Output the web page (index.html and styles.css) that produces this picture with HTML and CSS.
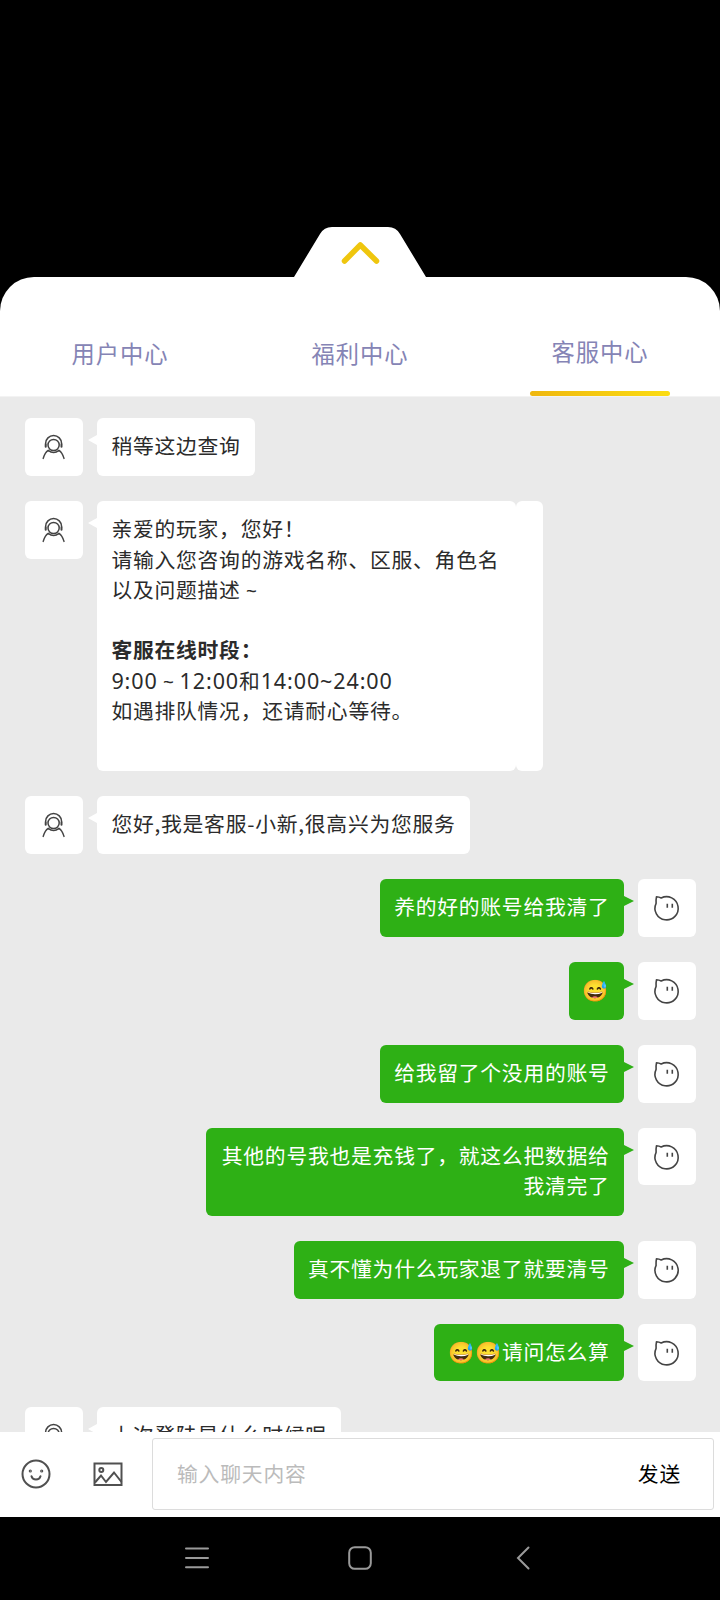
FILE: index.html
```html
<!DOCTYPE html>
<html lang="zh-CN">
<head>
<meta charset="utf-8">
<title>客服中心</title>
<link rel="stylesheet" href="styles.css">
</head>
<body>
<svg class="defs" aria-hidden="true">
  <symbol id="agent" viewBox="0 0 58 58">
    <g fill="none" stroke="#444" stroke-width="1.5" stroke-linecap="round">
      <circle cx="28.6" cy="27" r="5.600"/>
      <path d="M20.600 26v-.5a8 8 0 0 1 16 0v.5M18.200 40.400c1.100-3.700 2.600-6.500 5-8 3.400 2.700 7.400 2.700 10.800 0 2.400 1.500 3.900 4.300 5 8"/>
      <path stroke-width="2" d="M20.700 26.500v2.200M36.500 26.500v2.200"/>
    </g>
  </symbol>
  <symbol id="player" viewBox="0 0 58 58">
    <g fill="none" stroke="#444" stroke-width="1.600" stroke-linecap="round" stroke-linejoin="round">
      <path d="M18.100 24.300Q17.900 20.500 18.500 17.700 21 17.800 23.200 19A11.600 11.600 0 1 1 18.100 24.300"/>
      <path stroke-linecap="butt" d="M29.300 24.800v4M34.300 24.800v4"/>
    </g>
  </symbol>
</svg>
<div class="screen">
  <div class="game">
    <svg class="handle" viewBox="0 0 132 50"><path d="M0 50 26 7Q30 0 38 0h56q8 0 12 7l26 43z" fill="#fff"/><path d="M50.500 34 66.300 18 82.500 34" fill="none" stroke="#efc60e" stroke-width="5.500" stroke-linecap="round" stroke-linejoin="round"/></svg>
  </div>
  <div class="sheet">
    <div class="tabs">
      <div class="tab">用户中心</div>
      <div class="tab">福利中心</div>
      <div class="tab active">客服中心</div>
    </div>
  </div>
  <div class="chat">
    <div class="msg"><div class="avatar"><svg><use href="#agent"/></svg></div><div class="bubble">稍等这边查询</div></div>
    <div class="msg"><div class="avatar"><svg><use href="#agent"/></svg></div><div class="card"><div class="bubble wide">亲爱的玩家，您好！<br>请输入您咨询的游戏名称、区服、角色名<br>以及问题描述<span class="latin tilde"> ~</span><br><br><b>客服在线时段：</b><br><span class="latin">9:00<span class="tilde"> ~ </span>12:00</span>和<span class="latin">14:00~24:00</span><br>如遇排队情况，还请耐心等待。<br><br></div><div class="tail"></div></div></div>
    <div class="msg"><div class="avatar"><svg><use href="#agent"/></svg></div><div class="bubble">您好,我是客服-小新,很高兴为您服务</div></div>
    <div class="msg own"><div class="avatar"><svg><use href="#player"/></svg></div><div class="bubble">养的好的账号给我清了</div></div>
    <div class="msg own"><div class="avatar"><svg><use href="#player"/></svg></div><div class="bubble"><span class="emoji">😅</span></div></div>
    <div class="msg own"><div class="avatar"><svg><use href="#player"/></svg></div><div class="bubble">给我留了个没用的账号</div></div>
    <div class="msg own"><div class="avatar"><svg><use href="#player"/></svg></div><div class="bubble long">其他的号我也是充钱了，就这么把数据给<br>我清完了</div></div>
    <div class="msg own"><div class="avatar"><svg><use href="#player"/></svg></div><div class="bubble">真不懂为什么玩家退了就要清号</div></div>
    <div class="msg own"><div class="avatar"><svg><use href="#player"/></svg></div><div class="bubble"><span class="emoji">😅</span><span class="emoji">😅</span>请问怎么算</div></div>
    <div class="msg"><div class="avatar"><svg><use href="#agent"/></svg></div><div class="bubble">上次登陆是什么时候呢</div></div>
  </div>
  <div class="composer">
    <svg class="tool" viewBox="0 0 30 30" fill="none" stroke="#505050" stroke-width="2" stroke-linecap="round"><circle cx="15" cy="15" r="13.500"/><path d="M10.500 17.300c1.200 4.400 7.800 4.400 9 0"/><circle cx="9.300" cy="12" r=".6"/><circle cx="20.700" cy="12" r=".6"/></svg>
    <svg class="tool" viewBox="0 0 30 30" fill="none" stroke="#505050" stroke-width="2"><rect x="1.500" y="4.500" width="27" height="21.500"/><circle cx="8.300" cy="11" r="2"/><path d="m2 23.500 6-7 5 6.500 8-9.500 7.500 9.500"/></svg>
    <div class="field"><span class="hint">输入聊天内容</span><span class="send">发送</span></div>
  </div>
  <div class="nav">
    <svg viewBox="0 0 26 26"><path d="M2 3.500h22M2 13h22M2 22.300h22"/></svg>
    <svg viewBox="0 0 26 26"><rect x="2.200" y="2.200" width="21.600" height="21.600" rx="5.500"/></svg>
    <svg viewBox="0 0 26 26"><path d="M18.500 2.500 8 13l10.500 10.500"/></svg>
  </div>
</div>
</body>
</html>
```
FILE: styles.css
```css
* { box-sizing: border-box; }
body {
  margin: 0;
  background: #000;
  font-family: "Noto Sans CJK SC", sans-serif;
}
.defs { display: none; }
.screen {
  display: flex;
  flex-direction: column;
  width: 720px;
  height: 1600px;
  overflow: hidden;
}
.game {
  display: flex;
  flex: none;
  height: 277px;
  justify-content: center;
  align-items: flex-end;
}
.handle { display: block; width: 132px; height: 50px; }
.sheet {
  flex: none;
  height: 120px;
  padding-top: 34px;
  background: #fff;
  border-radius: 34px 34px 0 0;
  border-bottom: 1px solid #f3f3f3;
}
.tabs { display: grid; grid-template-columns: repeat(3, 240px); height: 85px; }
.tab {
  display: flex;
  flex-direction: column;
  align-items: center;
  padding-top: 25px;
  color: #8584b5;
  font-size: 23.300px;
  font-weight: 400;
  line-height: 34px;
  letter-spacing: .9px;
}
.active { padding-top: 23px; }
.active::after {
  content: "";
  width: 140px;
  height: 5px;
  margin-top: 23px;
  border-radius: 3px;
  background: linear-gradient(90deg, #efb70e, #fbdc12);
}
.chat {
  display: flex;
  flex: none;
  flex-direction: column;
  gap: 25.300px;
  height: 1034.500px;
  padding: 21.400px 24px 0 25px;
  overflow: hidden;
  background: #eaeaea;
}
.msg { display: flex; flex: none; gap: 14.400px; align-items: flex-start; }
.own { flex-direction: row-reverse; }
.avatar { flex: none; width: 58px; height: 57.600px; border-radius: 6px; background: #fff; }
.avatar svg { display: block; width: 58px; height: 58px; }
.bubble {
  position: relative;
  padding: 12px 14px 15.300px 14px;
  border-radius: 6px;
  background: #fff;
  color: #2b2b2b;
  font-size: 20.800px;
  font-weight: 400;
  line-height: 30.300px;
  letter-spacing: .75px;
  white-space: pre;
}
.bubble::before {
  content: "";
  position: absolute;
  top: 17px;
  left: -9px;
  border: solid transparent;
  border-width: 5px 9px 5px 0;
  border-right-color: #fff;
}
.own .bubble { background: #2eb015; color: #fff; text-align: right; }
.own .bubble::before {
  left: auto;
  right: -10px;
  border-width: 5px 0 5px 10px;
  border-left-color: #2eb015;
}
.own .long { padding-left: 16px; }
.card { display: flex; }
.wide { width: 418.500px; }
.tail { width: 27.500px; border-radius: 6px; background: #fff; }
.latin {
  font-family: "Noto Sans", sans-serif;
  font-size: 21.500px;
  line-height: 0;
  letter-spacing: .9px;
}
.tilde { font-size: 19px; letter-spacing: .4px; }
.emoji {
  font-family: "Noto Color Emoji", sans-serif;
  font-size: 21px;
  line-height: 0;
  letter-spacing: .6px;
}
.composer {
  display: flex;
  flex: none;
  align-items: center;
  height: 85.500px;
  padding: 0 6px 0 21px;
  background: #fff;
}
.tool { flex: none; width: 30px; height: 30px; margin-right: 42px; }
.field {
  display: flex;
  flex: 1;
  align-items: center;
  justify-content: space-between;
  height: 72px;
  padding: 0 32px 3px 24px;
  margin-left: -13px;
  border: 1px solid #dcdcdc;
  border-radius: 3px;
  font-size: 20.800px;
  letter-spacing: .8px;
}
.hint { color: #bbb; }
.send { color: #000; }
.nav {
  display: flex;
  flex: 1;
  justify-content: center;
  gap: 137px;
  padding-top: 27.500px;
}
.nav svg { width: 26px; height: 26px; fill: none; stroke: #9a9a9a; stroke-width: 2; stroke-linecap: round; }
```
